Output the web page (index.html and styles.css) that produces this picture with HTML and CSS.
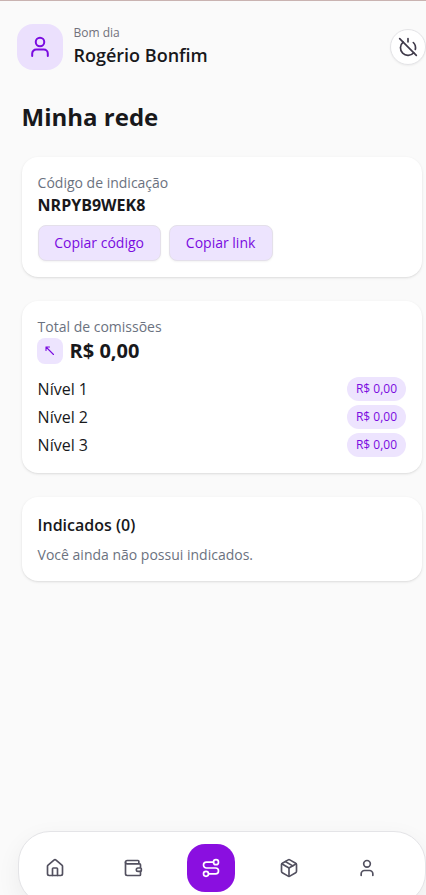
FILE: index.html
```html
<!DOCTYPE html>
<html lang="pt-BR">
<head>
<meta charset="utf-8">
<title>Minha rede</title>
<link rel="stylesheet" href="styles.css">
</head>
<body>
<div class="app">
  <header class="header">
    <div class="avatar">
      <svg class="icon-lg" viewBox="0 0 24 24"><circle cx="12" cy="7" r="4.25"/><path d="M4.2 21v-2.500a4 4 0 0 1 4-4h7.600a4 4 0 0 1 4 4V21"/></svg>
    </div>
    <div class="greeting">
      <span class="hello">Bom dia</span>
      <strong class="name">Rogério Bonfim</strong>
    </div>
    <button class="power" aria-label="Sair">
      <svg class="icon" viewBox="0 0 24 24"><path d="M18.360 6.640A9 9 0 0 1 20.770 15"/><path d="M6.160 6.160a9 9 0 1 0 12.680 12.680"/><path d="M12 2v4"/><path d="m2 2 20 20"/></svg>
    </button>
  </header>
  <main class="content">
    <h1 class="title">Minha rede</h1>
    <section class="card card-code">
      <p class="label">Código de indicação</p>
      <p class="code">NRPYB9WEK8</p>
      <div class="actions">
        <button class="btn btn-code">Copiar código</button>
        <button class="btn btn-link">Copiar link</button>
      </div>
    </section>
    <section class="card card-total">
      <p class="label">Total de comissões</p>
      <div class="total">
        <span class="badge"><svg viewBox="0 0 10 10"><path d="M1 4.500V1h3.500M1 1l7.500 7.500"/></svg></span>
        <strong class="amount">R$ 0,00</strong>
      </div>
      <ul class="levels">
        <li><span>Nível 1</span><span class="pill">R$ 0,00</span></li>
        <li><span>Nível 2</span><span class="pill">R$ 0,00</span></li>
        <li><span>Nível 3</span><span class="pill">R$ 0,00</span></li>
      </ul>
    </section>
    <section class="card card-referrals">
      <h2 class="subtitle">Indicados (0)</h2>
      <p class="label">Você ainda não possui indicados.</p>
    </section>
  </main>
  <nav class="nav">
    <a class="tab"><svg class="icon" viewBox="0 0 24 24"><path d="M15 21v-8a1 1 0 0 0-1-1h-4a1 1 0 0 0-1 1v8"/><path d="M3 10a2 2 0 0 1 .709-1.528l7-6a2 2 0 0 1 2.582 0l7 6A2 2 0 0 1 21 10v9a2 2 0 0 1-2 2H5a2 2 0 0 1-2-2z"/></svg></a>
    <a class="tab"><svg class="icon" viewBox="0 0 24 24"><path d="M19 7V4a1 1 0 0 0-1-1H5a2 2 0 0 0 0 4h15a1 1 0 0 1 1 1v4h-3a2 2 0 0 0 0 4h3a1 1 0 0 0 1-1v-2a1 1 0 0 0-1-1"/><path d="M3 5v14a2 2 0 0 0 2 2h15a1 1 0 0 0 1-1v-4"/></svg></a>
    <a class="tab tab-active"><svg class="icon" viewBox="0 0 24 24"><circle cx="6" cy="19" r="3"/><path d="M9 19h8.500a3.500 3.500 0 0 0 0-7h-11a3.500 3.500 0 0 1 0-7H15"/><circle cx="18" cy="5" r="3"/></svg></a>
    <a class="tab"><svg class="icon" viewBox="0 0 24 24"><path d="M11 21.730a2 2 0 0 0 2 0l7-4A2 2 0 0 0 21 16V8a2 2 0 0 0-1-1.730l-7-4a2 2 0 0 0-2 0l-7 4A2 2 0 0 0 3 8v8a2 2 0 0 0 1 1.730z"/><path d="M12 22V12"/><path d="M3.290 7 12 12l8.710-5"/><path d="m7.500 4.270 9 5.150"/></svg></a>
    <a class="tab"><svg class="icon" viewBox="0 0 24 24"><circle cx="12" cy="7" r="4"/><path d="M19 21v-2a4 4 0 0 0-4-4H9a4 4 0 0 0-4 4v2"/></svg></a>
  </nav>
</div>
</body>
</html>
```
FILE: styles.css
```css
* { box-sizing: border-box; margin: 0; padding: 0; }
body {
  height: 895px;
  overflow: hidden;
  background: #fafafa;
  color: #18181b;
  font-family: "Open Sans", "Noto Sans", sans-serif;
  font-size: 16px;
  line-height: 24px;
}
.app {
  display: flex;
  flex-direction: column;
  height: 905px;
  border-top: 1px solid #c9b3b1;
}
button { font: inherit; }
svg {
  display: block;
  fill: none;
  stroke: currentColor;
  stroke-width: 2;
  stroke-linecap: round;
  stroke-linejoin: round;
}
.icon { width: 20px; height: 20px; }
.icon-lg { width: 24px; height: 24px; }
.header {
  display: flex;
  align-items: center;
  height: 46px;
  margin: 23px 0 0 17px;
}
.avatar {
  display: grid;
  place-items: center;
  width: 46px;
  height: 46px;
  border-radius: 16px;
  background: #ebe0fd;
  color: #7a0be0;
}
.greeting {
  display: flex;
  flex-direction: column;
  margin: -2px 0 0 10.5px;
}
.hello { font-size: 12px; line-height: 18px; color: #71717a; }
.name { font-size: 18px; line-height: 27px; font-weight: 600; }
.power {
  display: grid;
  place-items: center;
  flex: none;
  width: 36px;
  height: 36px;
  margin-left: auto;
  border: 1px solid #e4e4e7;
  border-radius: 50%;
  background: #fff;
  color: #3f3a4a;
  box-shadow: 0 1px 2px rgba(0, 0, 0, .05);
}
.content {
  display: flex;
  flex-direction: column;
  gap: 24px;
  margin: 31px 4px 0 21.6px;
}
.title { font-size: 24px; line-height: 32px; font-weight: 700; }
.card {
  padding: 16px;
  border-radius: 16px;
  background: #fff;
  box-shadow: 0 1px 3px rgba(0, 0, 0, .1), 0 1px 2px -1px rgba(0, 0, 0, .1);
}
.card-code { height: 120px; }
.card-total { height: 172px; }
.card-referrals { height: 84px; }
.label { font-size: 14px; line-height: 20px; color: #6b7280; }
.code { font-weight: 700; }
.actions { display: flex; gap: 8px; margin-top: 8px; }
.btn {
  height: 36px;
  border: 1px solid #e4e0ea;
  border-radius: 8px;
  background: #ede4fe;
  color: #7a0be0;
  font-size: 14px;
  box-shadow: 0 1px 2px rgba(0, 0, 0, .05);
}
.btn-code { width: 123px; }
.btn-link { width: 104px; }
.total { display: flex; align-items: center; gap: 7px; height: 28px; margin-left: -1px; }
.badge {
  display: grid;
  place-items: center;
  width: 26px;
  height: 26px;
  border-radius: 8px;
  background: #ede4fe;
  color: #7a0be0;
}
.badge svg { width: 10px; height: 10px; stroke-width: 1.1; }
.amount { font-size: 20px; line-height: 28px; font-weight: 700; }
.levels {
  display: flex;
  flex-direction: column;
  gap: 4px;
  margin-top: 12px;
  list-style: none;
}
.levels li { display: flex; align-items: center; justify-content: space-between; }
.pill {
  width: 59px;
  height: 24px;
  border-radius: 12px;
  background: #ede4fe;
  color: #7a0be0;
  font-size: 12px;
  text-align: center;
}
.subtitle { font-size: 16px; line-height: 24px; font-weight: 600; }
.subtitle + .label { margin-top: 8px; }
.nav {
  display: flex;
  gap: 30px;
  flex: none;
  width: 408px;
  height: 74px;
  margin: auto 0 0 18px;
  padding: 12px;
  border: 1px solid #e4e4e7;
  border-radius: 32px;
  background: #fff;
  box-shadow: 0 8px 24px rgba(0, 0, 0, .06);
}
.tab {
  display: grid;
  place-items: center;
  width: 48px;
  height: 48px;
  border-radius: 18px;
  color: #52505f;
}
.tab-active { background: #8a0fe0; color: #fff; }
```
